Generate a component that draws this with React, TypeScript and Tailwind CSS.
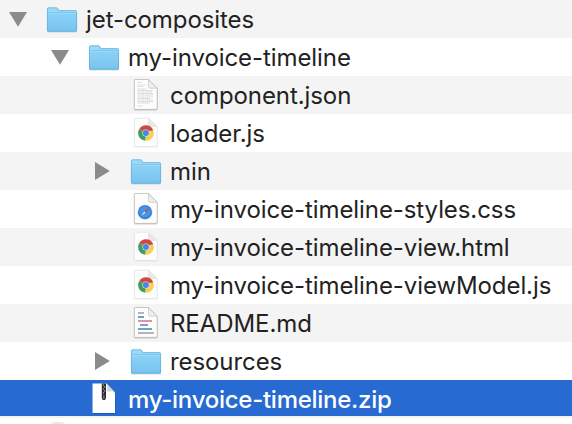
import type { ReactNode } from "react";

function Folder() {
  return (
    <svg width="32" height="28" viewBox="0 0 32 28" className="mt-px block">
      <defs>
        <linearGradient id="folder" x1="0" y1="0" x2="0" y2="1">
          <stop offset="0" stopColor="#8bd2f8" />
          <stop offset="1" stopColor="#78c3ee" />
        </linearGradient>
      </defs>
      <rect x="1" y="24.8" width="30" height="1.8" rx="0.8" fill="#777" opacity=".3" />
      <path d="M1 3Q1 1.4 2.5 1.4H10.5Q11.5 1.4 12.2 2.7L13 4.2H29.5Q31 4.2 31 5.7V24.2Q31 25.6 29.5 25.6H2.5Q1 25.6 1 24.2Z" fill="#9bd9f8" />
      <path d="M1 7H31V24.2Q31 25.6 29.5 25.6H2.5Q1 25.6 1 24.2Z" fill="url(#folder)" />
      <path d="M1.4 3.2Q1.4 1.8 2.6 1.8H10.4Q11.3 1.8 12 3L12.8 4.6H29.4Q30.6 4.6 30.6 5.8V24Q30.6 25.2 29.4 25.2H2.6Q1.4 25.2 1.4 24Z" fill="none" stroke="#5faed8" strokeWidth=".7" />
      <path d="M1.5 6.6H30.5" stroke="#6fbbe3" strokeWidth=".7" />
      <path d="M1.7 7.4H30.3" stroke="#a7def9" strokeWidth=".6" />
    </svg>
  );
}

function Page({ children, pale = false, height = 30 }: { children?: ReactNode; pale?: boolean; height?: number }) {
  return (
    <svg width="26" height="32" viewBox="0 0 26 32" className="block">
      <g transform={pale ? `translate(0 .8) scale(1 ${height / 30})` : undefined}>
        <path d="M2 1.2H16L24.5 10V30Q24.5 31.4 23.5 31.4H2Q1 31.4 1 30V2.2Q1 1.2 2 1.2Z" fill="#666" opacity={pale ? 0.12 : 0.35} />
        <path d="M2 .5H15.7L24.2 9.2V29.5Q24.2 30.4 23.2 30.4H2.2Q1.3 30.4 1.3 29.5V1.5Q1.3 .5 2 .5Z" fill="#fdfdfd" stroke={pale ? "#e0e0e0" : "#b2b2b2"} strokeWidth=".7" />
        <path d="M15.5 .8V7.6Q15.5 9.2 17.2 9.2H24Z" fill={pale ? "#e8e8e8" : "#eee"} stroke={pale ? "#dedede" : "#bcbcbc"} strokeWidth=".6" />
      </g>
      {children}
    </svg>
  );
}

function TextFile() {
  return (
    <Page>
      <g stroke="#b5b5b5" strokeWidth=".5" strokeDasharray="2.4 .35 1.3 .3">
        <path d="M4.5 3.5H9M4.5 6H13M4.5 7.5H10M4.5 10H13M4.5 11.5H20M4.5 13H19M4.5 14.5H20M4.5 16H20M4.5 18H20M4.5 19.5H17M4.5 21H20M4.5 22.5H20M4.5 24H17M4.5 27H10" />
      </g>
    </Page>
  );
}

function Chrome() {
  return (
    <Page pale height={28.3}>
      <g transform="translate(.4 .7)">
        <path d="M12.5 15.3L5.8 11.4A7.8 7.8 0 0 1 19.5 11.7Z" fill="#d0493f" />
        <path d="M12.5 15.3L5.8 11.4A7.8 7.8 0 0 0 12 23.1Z" fill="#3e9f5a" />
        <path d="M12.5 15.3L19.5 11.7A7.8 7.8 0 0 1 12 23.1Z" fill="#f6cf55" />
        <path d="M12.5 11.4H19.4L19 13H14Z" fill="#d0493f" />
        <path d="M5.8 11.4L9.2 17.3L12.6 19.3L11 21.5Z" fill="#3e9f5a" />
        <circle cx="12.5" cy="15.3" r="3.6" fill="#dfe5f5" />
        <circle cx="12.5" cy="15.3" r="3" fill="#4b83e9" />
      </g>
    </Page>
  );
}

function Safari() {
  return (
    <Page>
      <circle cx="12" cy="19.2" r="7.5" fill="#b9cbdc" />
      <circle cx="12" cy="19.2" r="6.9" fill="#2878d8" />
      <circle cx="12" cy="18.8" r="5.8" fill="#4394e6" />
      <path d="M15.8 15.6L11.2 18.4L12.6 19.8Z" fill="#d9433d" stroke="#d9433d" strokeWidth=".4" />
      <path d="M8.4 22.8L11.2 18.4L12.6 19.8Z" fill="#e4edf4" />
    </Page>
  );
}

function Readme() {
  return (
    <Page>
      <path d="M5 6H11M5 26H21" stroke="#b4b4b4" strokeWidth="2" />
      <path d="M5 10H11M5 22H19" stroke="#5eacb8" strokeWidth="2" />
      <path d="M5 14H19" stroke="#d19b9b" strokeWidth="2" />
      <path d="M7 18H15" stroke="#a283f2" strokeWidth="2" />
    </Page>
  );
}

function Zip() {
  return (
    <svg width="26" height="32" viewBox="0 0 26 32" className="mt-[2px] block">
      <path d="M1.5 1H15.5L24.5 10.5V31H1.5Z" fill="#194b9b" opacity=".6" />
      <path d="M1.5 .5H15.5L24 9.5V30H1.5Z" fill="white" />
      <path d="M15.5 .5L24 9.5Q19.5 7.2 16 9Q17 4 15.5 .5Z" fill="#d5d5d5" />
      <path d="M10.8 .5H15V15L14 17H11.8L10.8 15Z" fill="#282828" />
      <path d="M11.8 2H13.1M12.8 4H14.3M11.8 6H13.1M12.8 8H14.3M11.8 10H13.1M12.2 13H13.5M12.2 15H13.5" stroke="#ddd" strokeWidth=".9" />
    </svg>
  );
}

function Arrow({ open = false }: { open?: boolean }) {
  return (
    <svg width="18" height="18" viewBox="0 0 18 18" className="block">
      <path d={open ? "M0 2H18L9 16.7Z" : "M2 0V18L16.8 9Z"} fill="#8b8b8b" />
    </svg>
  );
}

function Row({ name, level, icon, arrow, striped, selected }: {
  name: string; level: string; icon: ReactNode; arrow?: ReactNode; striped?: boolean; selected?: boolean;
}) {
  return (
    <div className={`flex h-[38px] shrink-0 ${striped ? "bg-[#f4f4f4]" : "bg-white"}`}>
      <div className={`flex w-full items-center ${level} ${selected ? "h-9 bg-[#276ad2] text-white" : "text-[#222]"}`}>
        <div className="w-[18px] shrink-0">{arrow}</div>
        <div className="ml-[18px] flex w-[34px] shrink-0 justify-center">{icon}</div>
        <span className={`ml-[7px] whitespace-nowrap text-[24px] ${selected ? "pt-[3px] font-medium leading-[33px] tracking-[-0.27px]" : "pt-[2px] font-normal leading-9 tracking-[-0.08px]"}`}>{name}</span>
      </div>
    </div>
  );
}

export default function App() {
  return (
    <main className="flex h-[424px] w-[572px] flex-col overflow-hidden bg-white font-['Inter','Liberation_Sans',sans-serif]">
      <Row striped level="pl-[9px]" name="jet-composites" icon={<Folder />} arrow={<Arrow open />} />
      <Row level="pl-[51px]" name="my-invoice-timeline" icon={<Folder />} arrow={<Arrow open />} />
      <Row striped level="pl-[93px]" name="component.json" icon={<TextFile />} />
      <Row level="pl-[93px]" name="loader.js" icon={<Chrome />} />
      <Row striped level="pl-[93px]" name="min" icon={<Folder />} arrow={<Arrow />} />
      <Row level="pl-[93px]" name="my-invoice-timeline-styles.css" icon={<Safari />} />
      <Row striped level="pl-[93px]" name="my-invoice-timeline-view.html" icon={<Chrome />} />
      <Row level="pl-[93px]" name="my-invoice-timeline-viewModel.js" icon={<Chrome />} />
      <Row striped level="pl-[93px]" name="README.md" icon={<Readme />} />
      <Row level="pl-[93px]" name="resources" icon={<Folder />} arrow={<Arrow />} />
      <Row striped selected level="pl-[51px]" name="my-invoice-timeline.zip" icon={<Zip />} />
      <div className="h-1.5 pl-[51px] pt-1">
        <div className="h-1 w-3.5 rounded-t-sm bg-[#e8e8e8]" />
      </div>
    </main>
  );
}
